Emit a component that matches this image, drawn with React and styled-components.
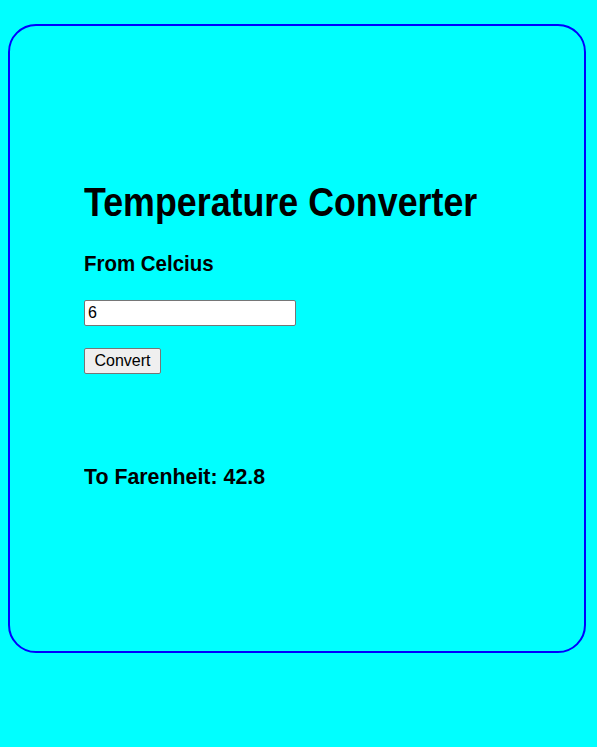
import { useState } from 'react'
import styled, { createGlobalStyle } from 'styled-components'

const GlobalStyle = createGlobalStyle`
  body {
    margin: 8px;
    background-color: cyan;
    font-family: "Liberation Sans", Arial, sans-serif;
  }
`

const Card = styled.div`
  margin-top: 16px;
  width: 578px;
  height: 629px;
  box-sizing: border-box;
  border: 2px solid blue;
  border-radius: 28px;
  padding: 152px 74px 0;
`

// condensed look: the reference uses a narrow grotesque we don't have
const Heading = styled.div`
  margin: ${(p) => p.$top}px 0 0;
  font-family: "Liberation Sans", Arial, sans-serif;
  font-size: ${(p) => p.$size}px;
  line-height: ${(p) => p.$lh}px;
  font-weight: bold;
  white-space: nowrap;
  transform: scaleX(${(p) => p.$scale});
  transform-origin: left center;
`

const Input = styled.input`
  display: block;
  margin-top: 23px;
  width: 212px;
  height: 26px;
  box-sizing: border-box;
  font-family: "Liberation Sans", Arial, sans-serif;
  font-size: 16px;
  padding: 1px 3px;
  border: 1px solid #767676;
  border-radius: 2px;
`

const Button = styled.button`
  display: block;
  margin-top: 22px;
  width: 77px;
  height: 26px;
  padding: 1px 6px;
  font-family: "Liberation Sans", Arial, sans-serif;
  font-size: 16px;
  color: black;
  background-color: #efefef;
  border: 1px solid #767676;
  border-radius: 2px;
`

const App = () => {
  const [celcius, setCelcius] = useState('6')
  const [farenheit, setFarenheit] = useState(42.8)

  const convert = () => setFarenheit(Math.round((Number(celcius) * 9 / 5 + 32) * 100) / 100)

  return (
    <>
      <GlobalStyle />
      <Card>
        <Heading $top={0} $size={40} $lh={48} $scale={0.895}>Temperature Converter</Heading>
        <Heading $top={25} $size={22} $lh={26} $scale={0.93}>From Celcius</Heading>
        <Input value={celcius} onChange={(e) => setCelcius(e.target.value)} />
        <Button onClick={convert}>Convert</Button>
        <Heading $top={90} $size={22} $lh={26} $scale={0.97}>To Farenheit: {farenheit}</Heading>
      </Card>
    </>
  )
}

export default App
